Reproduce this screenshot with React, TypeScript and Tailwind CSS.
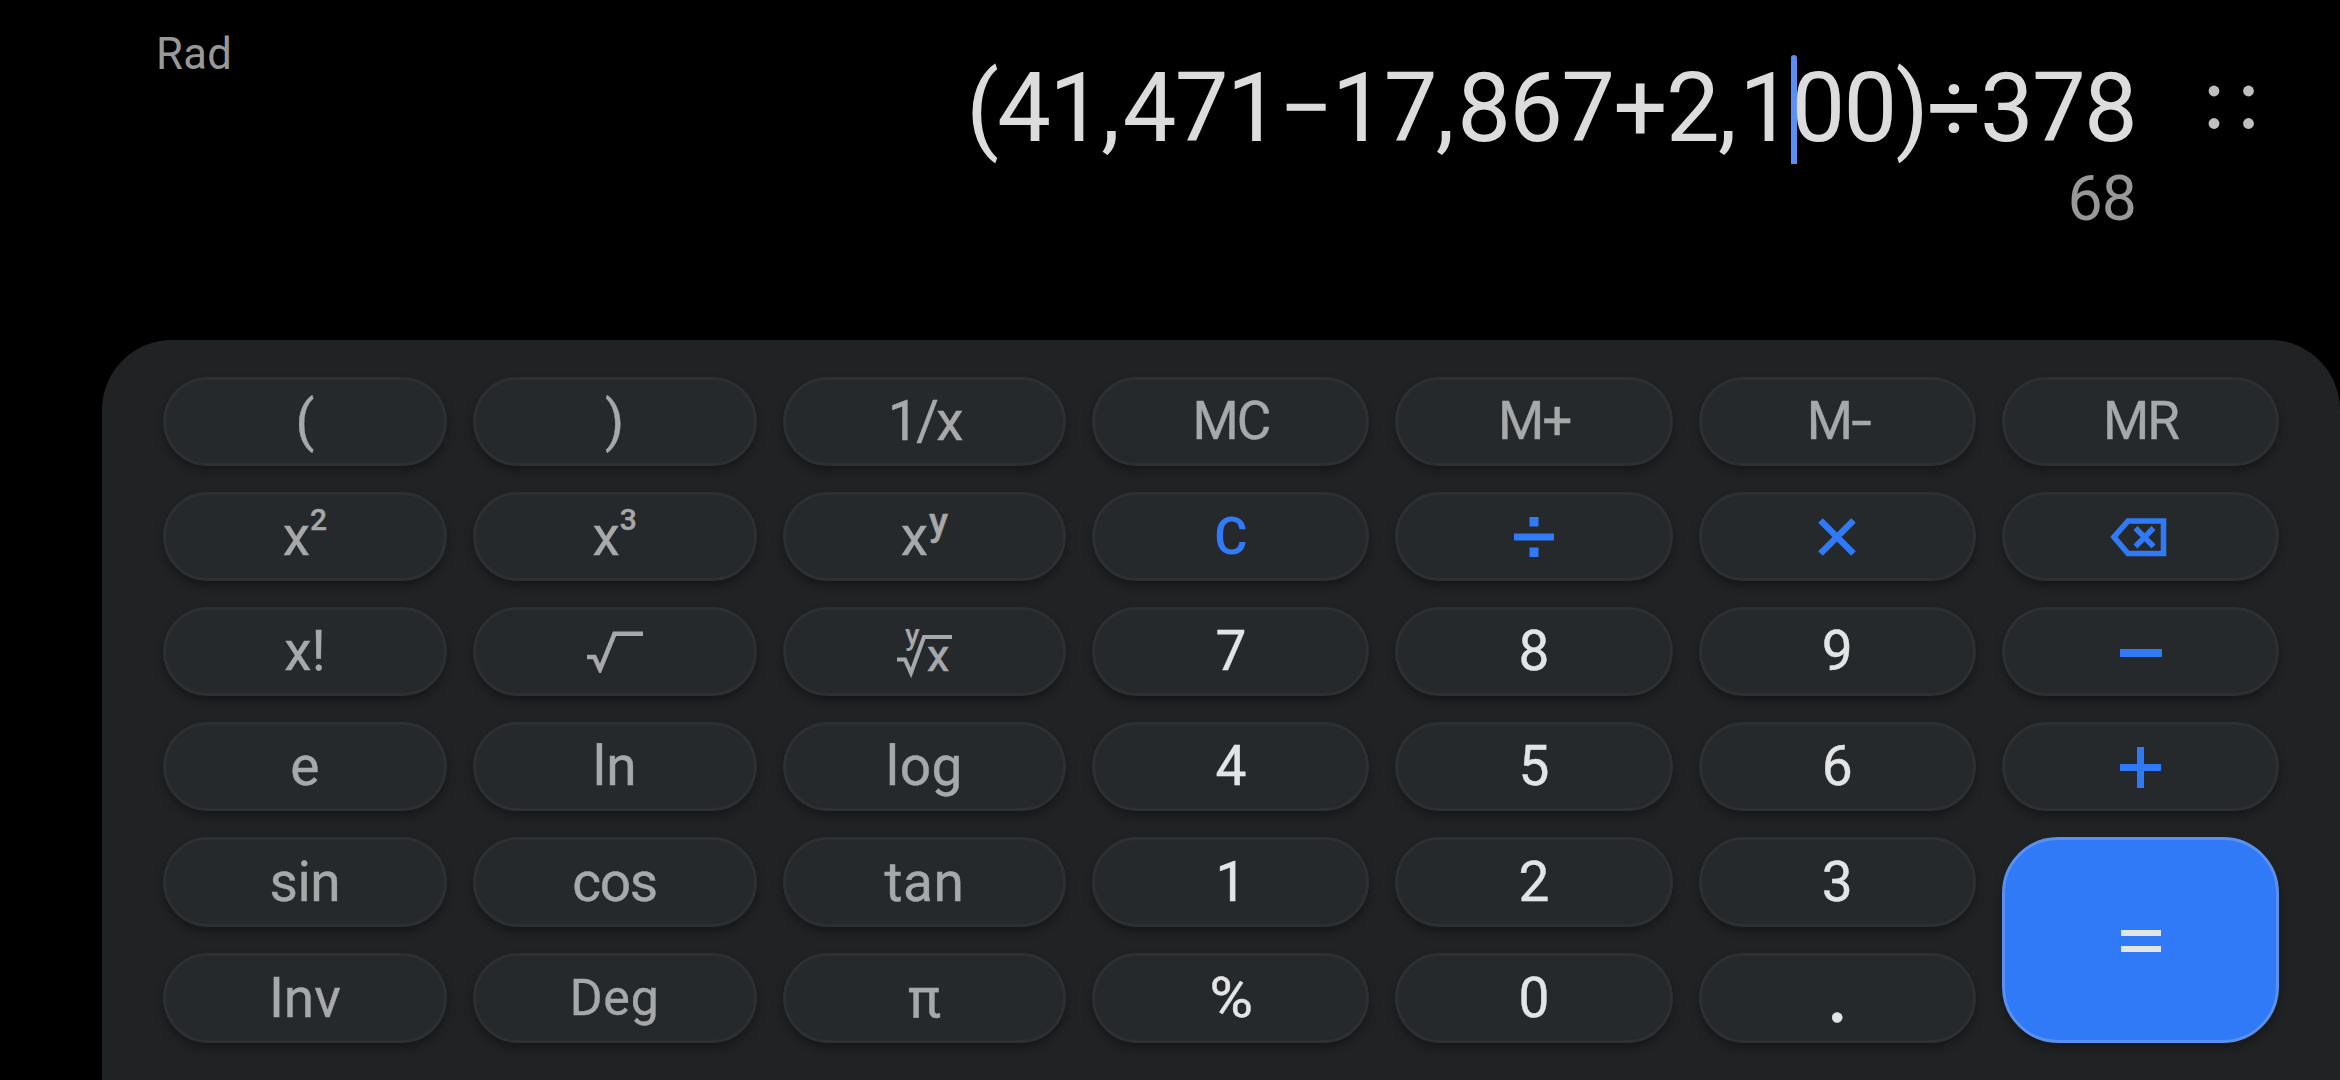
import { Fragment, ReactNode } from 'react';
import clsx from 'clsx';

type Tone = 'function' | 'digit' | 'operator';

interface KeyDef {
  id: string;
  tone: Tone;
  content: ReactNode;
}

const toneClasses: Record<Tone, string> = {
  function: 'text-[#a6a8aa]',
  digit: 'text-[#e3e4e5]',
  operator: 'text-[#317af7]',
};

const Power = ({ exponent }: { exponent: string }) => (
  <span className="flex items-start">
    <span>x</span>
    <span className="pt-[7px] text-[30px] leading-[35px] font-medium">{exponent}</span>
  </span>
);

const DivideIcon = () => (
  <svg width="42" height="40" viewBox="0 0 42 40" fill="currentColor">
    <rect x="1" y="16.5" width="40" height="7" />
    <rect x="16.5" y="0" width="9" height="9.5" />
    <rect x="16.5" y="30.5" width="9" height="9.5" />
  </svg>
);

const MultiplyIcon = () => (
  <svg width="38" height="38" viewBox="0 0 38 38" fill="none" stroke="currentColor" strokeWidth="6.5">
    <path d="M2.5 2.5 35.5 35.5M35.5 2.5 2.5 35.5" />
  </svg>
);

const BackspaceIcon = () => (
  <svg className="-ml-[4px]" width="58" height="40" viewBox="0 0 58 40" fill="none" stroke="currentColor">
    <path d="M19 4H54.5V36.5H19L5 20Z" strokeWidth="5.6" />
    <path d="M26.5 11 44.5 29.5M44.5 11 26.5 29.5" strokeWidth="5.5" />
  </svg>
);

const MinusIcon = () => (
  <svg className="mt-[2px] ml-[2px]" width="42" height="8" viewBox="0 0 42 8" fill="currentColor">
    <rect width="42" height="8" />
  </svg>
);

const PlusIcon = () => (
  <svg className="mt-[2px] ml-px" width="41" height="41" viewBox="0 0 41 41" fill="currentColor">
    <rect y="17" width="41" height="7" />
    <rect x="17" width="7" height="41" />
  </svg>
);

const EqualsIcon = () => (
  <svg className="mt-[2px] ml-[2px]" width="40" height="22" viewBox="0 0 40 22" fill="currentColor">
    <rect width="40" height="6" />
    <rect y="16" width="40" height="6" />
  </svg>
);

const SquareRootIcon = () => (
  <svg className="ml-px" width="58" height="42" viewBox="0 0 58 42" fill="none" stroke="currentColor" strokeWidth="4.5">
    <path d="M1 26H8.5L14 38.5 28.5 2.8H57" />
  </svg>
);

const NthRootIcon = () => (
  <svg className="ml-px" width="56" height="84" viewBox="0 -16 56 84" fill="none" stroke="currentColor" strokeWidth="4">
    <path d="M0 33.5H8L14 47 27 11H55" />
    <text x="8" y="18.5" fontSize="30" fontWeight="500" fill="currentColor" stroke="none">y</text>
    <text x="30" y="45" fontSize="45" fill="currentColor" strokeWidth="0.6">x</text>
  </svg>
);

const keys: KeyDef[] = [
  { id: 'open', tone: 'function', content: <span>(</span> },
  { id: 'close', tone: 'function', content: <span>)</span> },
  { id: 'inverse', tone: 'function', content: <span className="tracking-[-2.5px]">1/x</span> },
  { id: 'mc', tone: 'function', content: <span className="text-[53px] tracking-[-2px]">MC</span> },
  { id: 'm-plus', tone: 'function', content: <span className="text-[53px] tracking-[-2px]">M+</span> },
  {
    id: 'm-minus',
    tone: 'function',
    content: (
      <span className="text-[53px] tracking-[-1px]">
        M<span className="ml-[2px] inline-block scale-x-[1.4]">-</span>
      </span>
    ),
  },
  { id: 'mr', tone: 'function', content: <span className="text-[53px] tracking-[-2px]">MR</span> },

  { id: 'square', tone: 'function', content: <Power exponent="2" /> },
  { id: 'cube', tone: 'function', content: <Power exponent="3" /> },
  {
    id: 'power',
    tone: 'function',
    content: (
      <span className="flex items-start">
        <span>x</span>
        <span className="ml-px pt-[8px] text-[39px] leading-[39px] font-medium">y</span>
      </span>
    ),
  },
  { id: 'clear', tone: 'operator', content: <span className="pt-px text-[51px] font-medium [-webkit-text-stroke:0]">C</span> },
  { id: 'divide', tone: 'operator', content: <DivideIcon /> },
  { id: 'multiply', tone: 'operator', content: <MultiplyIcon /> },
  { id: 'backspace', tone: 'operator', content: <BackspaceIcon /> },

  { id: 'factorial', tone: 'function', content: <span>x!</span> },
  { id: 'sqrt', tone: 'function', content: <SquareRootIcon /> },
  { id: 'nth-root', tone: 'function', content: <NthRootIcon /> },
  { id: '7', tone: 'digit', content: <span>7</span> },
  { id: '8', tone: 'digit', content: <span>8</span> },
  { id: '9', tone: 'digit', content: <span>9</span> },
  { id: 'minus', tone: 'operator', content: <MinusIcon /> },

  { id: 'e', tone: 'function', content: <span>e</span> },
  { id: 'ln', tone: 'function', content: <span>ln</span> },
  { id: 'log', tone: 'function', content: <span className="tracking-[0.5px]">log</span> },
  { id: '4', tone: 'digit', content: <span>4</span> },
  { id: '5', tone: 'digit', content: <span>5</span> },
  { id: '6', tone: 'digit', content: <span>6</span> },
  { id: 'plus', tone: 'operator', content: <PlusIcon /> },

  { id: 'sin', tone: 'function', content: <span className="tracking-[-0.5px]">sin</span> },
  { id: 'cos', tone: 'function', content: <span className="tracking-[-1.3px]">cos</span> },
  { id: 'tan', tone: 'function', content: <span className="tracking-[0.6px]">tan</span> },
  { id: '1', tone: 'digit', content: <span>1</span> },
  { id: '2', tone: 'digit', content: <span>2</span> },
  { id: '3', tone: 'digit', content: <span>3</span> },
  { id: 'equals', tone: 'digit', content: <EqualsIcon /> },

  { id: 'inv', tone: 'function', content: <span>Inv</span> },
  { id: 'deg', tone: 'function', content: <span className="text-[50px] tracking-[0.8px]">Deg</span> },
  { id: 'pi', tone: 'function', content: <span>π</span> },
  { id: 'percent', tone: 'digit', content: <span className="scale-x-[1.08]">%</span> },
  { id: '0', tone: 'digit', content: <span>0</span> },
  { id: 'dot', tone: 'digit', content: <span className="pb-[15px] font-['Lato'] text-[80px] leading-none">.</span> },
];

const CalcKey = ({ def }: { def: KeyDef }) => {
  const isEquals = def.id === 'equals';
  return (
    <button
      className={clsx(
        'flex items-center justify-center border-[3px] text-[55px] shadow-[0_5px_8px_rgba(0,0,0,0.32)] [-webkit-text-stroke:0.4px]',
        toneClasses[def.tone],
        isEquals
          ? 'row-span-2 rounded-[56px] border-[#5a90ee] bg-[#317af7]'
          : 'rounded-[45px] border-[#2d2f32] bg-[#26292c]'
      )}
    >
      {def.content}
    </button>
  );
};

// Splits at the thousands separators so they get looser tracking than the digits
const Formula = ({ text }: { text: string }) => (
  <>
    {text.split(',').map((part, i) => (
      <Fragment key={i}>
        {i > 0 && <span className="tracking-[2.6px]">,</span>}
        {part}
      </Fragment>
    ))}
  </>
);

const Display = () => (
  <header className="flex h-[340px] items-start justify-between pl-[156px] pr-[85px]">
    <div className="pt-[29px] text-[43.6px] leading-[51px] tracking-[0.3px] text-[#989898]">Rad</div>
    <div className="flex items-start">
      <div className="flex flex-col items-end pt-[52px]">
        <div className="text-[95.6px] leading-[112px] tracking-[-1.7px] whitespace-nowrap text-[#dcdcdc]">
          <Formula text="(41,471−17,867+2,1" />
          <span className="relative">
            <span className="absolute top-[3px] left-0 h-[109px] w-[6px] rounded-t-[3px] bg-[#5b8ff5]" />
          </span>
          <span className="relative">
            <Formula text="00)÷378" />
          </span>
        </div>
        <div className="-mt-[2px] text-[62.6px] leading-[73px] tracking-[-0.9px] text-[#989898]">68</div>
      </div>
      <svg className="mt-[85px] ml-[72px]" width="47" height="45" viewBox="0 0 47 45" fill="#bfbfbf">
        <circle cx="6" cy="6" r="5.4" />
        <circle cx="40.5" cy="6" r="5.4" />
        <circle cx="6" cy="38.5" r="5.4" />
        <circle cx="40.5" cy="38.5" r="5.4" />
      </svg>
    </div>
  </header>
);

const App = () => {
  return (
    <div className="flex h-[1080px] w-[2340px] flex-col overflow-hidden bg-black font-['Roboto','Noto_Sans',sans-serif]">
      <Display />
      <main className="ml-[102px] grow rounded-t-[70px] bg-[#212224] pt-[37px] pr-[61px] pl-[61px]">
        <div className="grid grid-cols-[repeat(3,283.8fr)_repeat(4,277.2fr)] grid-rows-[89px_89px_89px_89px_90px_90px] gap-[26px]">
          {keys.map((key) => (
            <CalcKey key={key.id} def={key} />
          ))}
        </div>
      </main>
    </div>
  );
};

export default App;
